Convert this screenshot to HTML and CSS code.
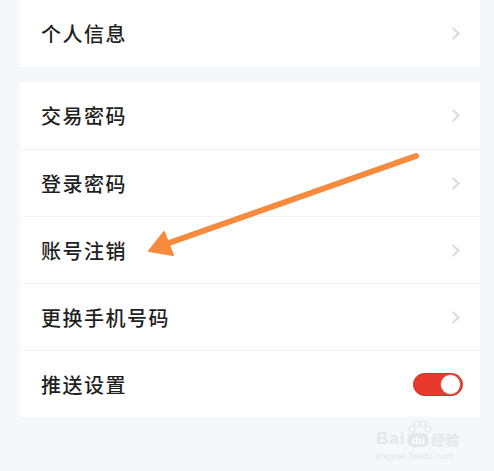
FILE: index.html
```html
<!doctype html>
<html>
<head>
<meta charset="utf-8">
<title>账号设置</title>
<link rel="stylesheet" href="styles.css">
</head>
<body>
	<div class="page">
		<div class="card">
			<div class="row"><span class="label">个人信息</span><span class="chev"></span></div>
		</div>
		<div class="card">
			<div class="row"><span class="label">交易密码</span><span class="chev"></span></div>
			<div class="row"><span class="label">登录密码</span><span class="chev"></span></div>
			<div class="row"><span class="label">账号注销</span><span class="chev"></span></div>
			<div class="row"><span class="label">更换手机号码</span><span class="chev"></span></div>
			<div class="row"><span class="label">推送设置</span><span class="switch on"><i></i></span></div>
		</div>
	</div>

	<svg class="arrow" width="494" height="471" viewBox="0 0 494 471">
		<line x1="416" y1="156" x2="166" y2="244" stroke="#f68a3d" stroke-width="6" stroke-linecap="round"/>
		<polygon points="149,251 164,232 173,255" fill="#f68a3d" stroke="#f68a3d" stroke-width="2" stroke-linejoin="round"/>
	</svg>

	<div class="mark">
		<div class="mark_top">
			<span class="bai">Bai</span>
			<span class="du">du
				<svg class="paw" width="26" height="16" viewBox="0 0 26 16">
					<circle cx="5" cy="10" r="3" />
					<circle cx="10" cy="5" r="3" />
					<circle cx="16" cy="5" r="3" />
					<circle cx="21" cy="10" r="3" />
				</svg>
			</span>
			<span class="jy">经验</span>
		</div>
		<div class="mark_url">jingyan.baidu.com</div>
	</div>
</body>
</html>
```

FILE: styles.css
```css
body{ margin:0; background:#f5f7fa; font-family:"Noto Sans CJK SC", "Noto Sans", sans-serif;}
.page{ padding:0 14px 0 20px; display:flex; flex-direction:column; gap:15px;}
.card{ background:#fff; display:flex; flex-direction:column;}
.row{ height:67px; box-sizing:border-box; padding:0 17px 0 21px; display:flex; align-items:center; justify-content:space-between; border-top:1px solid #f2f3f5;}
.row:first-child{ border-top:none;}
.label{ font-size:20px; font-weight:500; color:#1f1f1f; letter-spacing:1.5px;}
.chev{ width:7px; height:7px; border-top:2px solid #d8dadd; border-right:2px solid #d8dadd; transform:rotate(45deg); margin-right:5px;}
.switch{ width:50px; height:23px; border-radius:12px; background:#e8392c; box-sizing:border-box; border:1px solid #c83228; position:relative;}
.switch i{ position:absolute; right:1px; top:0; width:21px; height:21px; border-radius:50%; background:#fff; box-sizing:border-box; border:1px solid #d9544a;}
.arrow{ position:absolute; left:0; top:0; pointer-events:none;}
.mark{ position:absolute; left:376px; top:425px; color:#e3e6eb; font-family:"Liberation Sans", sans-serif;}
.mark_top{ display:flex; align-items:flex-end; gap:2px; height:22px;}
.bai{ font-size:17px; font-weight:bold; letter-spacing:1px; line-height:17px;}
.du{ position:relative; font-size:11px; font-weight:bold; color:#fff; background:#e3e6eb; border-radius:9px; padding:1px 4px; line-height:12px;}
.paw{ position:absolute; left:0; top:-14px; fill:none; stroke:#e3e6eb; stroke-width:1.2;}
.jy{ font-family:"Noto Sans CJK SC", sans-serif; font-size:14px; line-height:16px; font-weight:bold;}
.mark_url{ font-size:9px; margin-top:4px; letter-spacing:0.3px;}
```
